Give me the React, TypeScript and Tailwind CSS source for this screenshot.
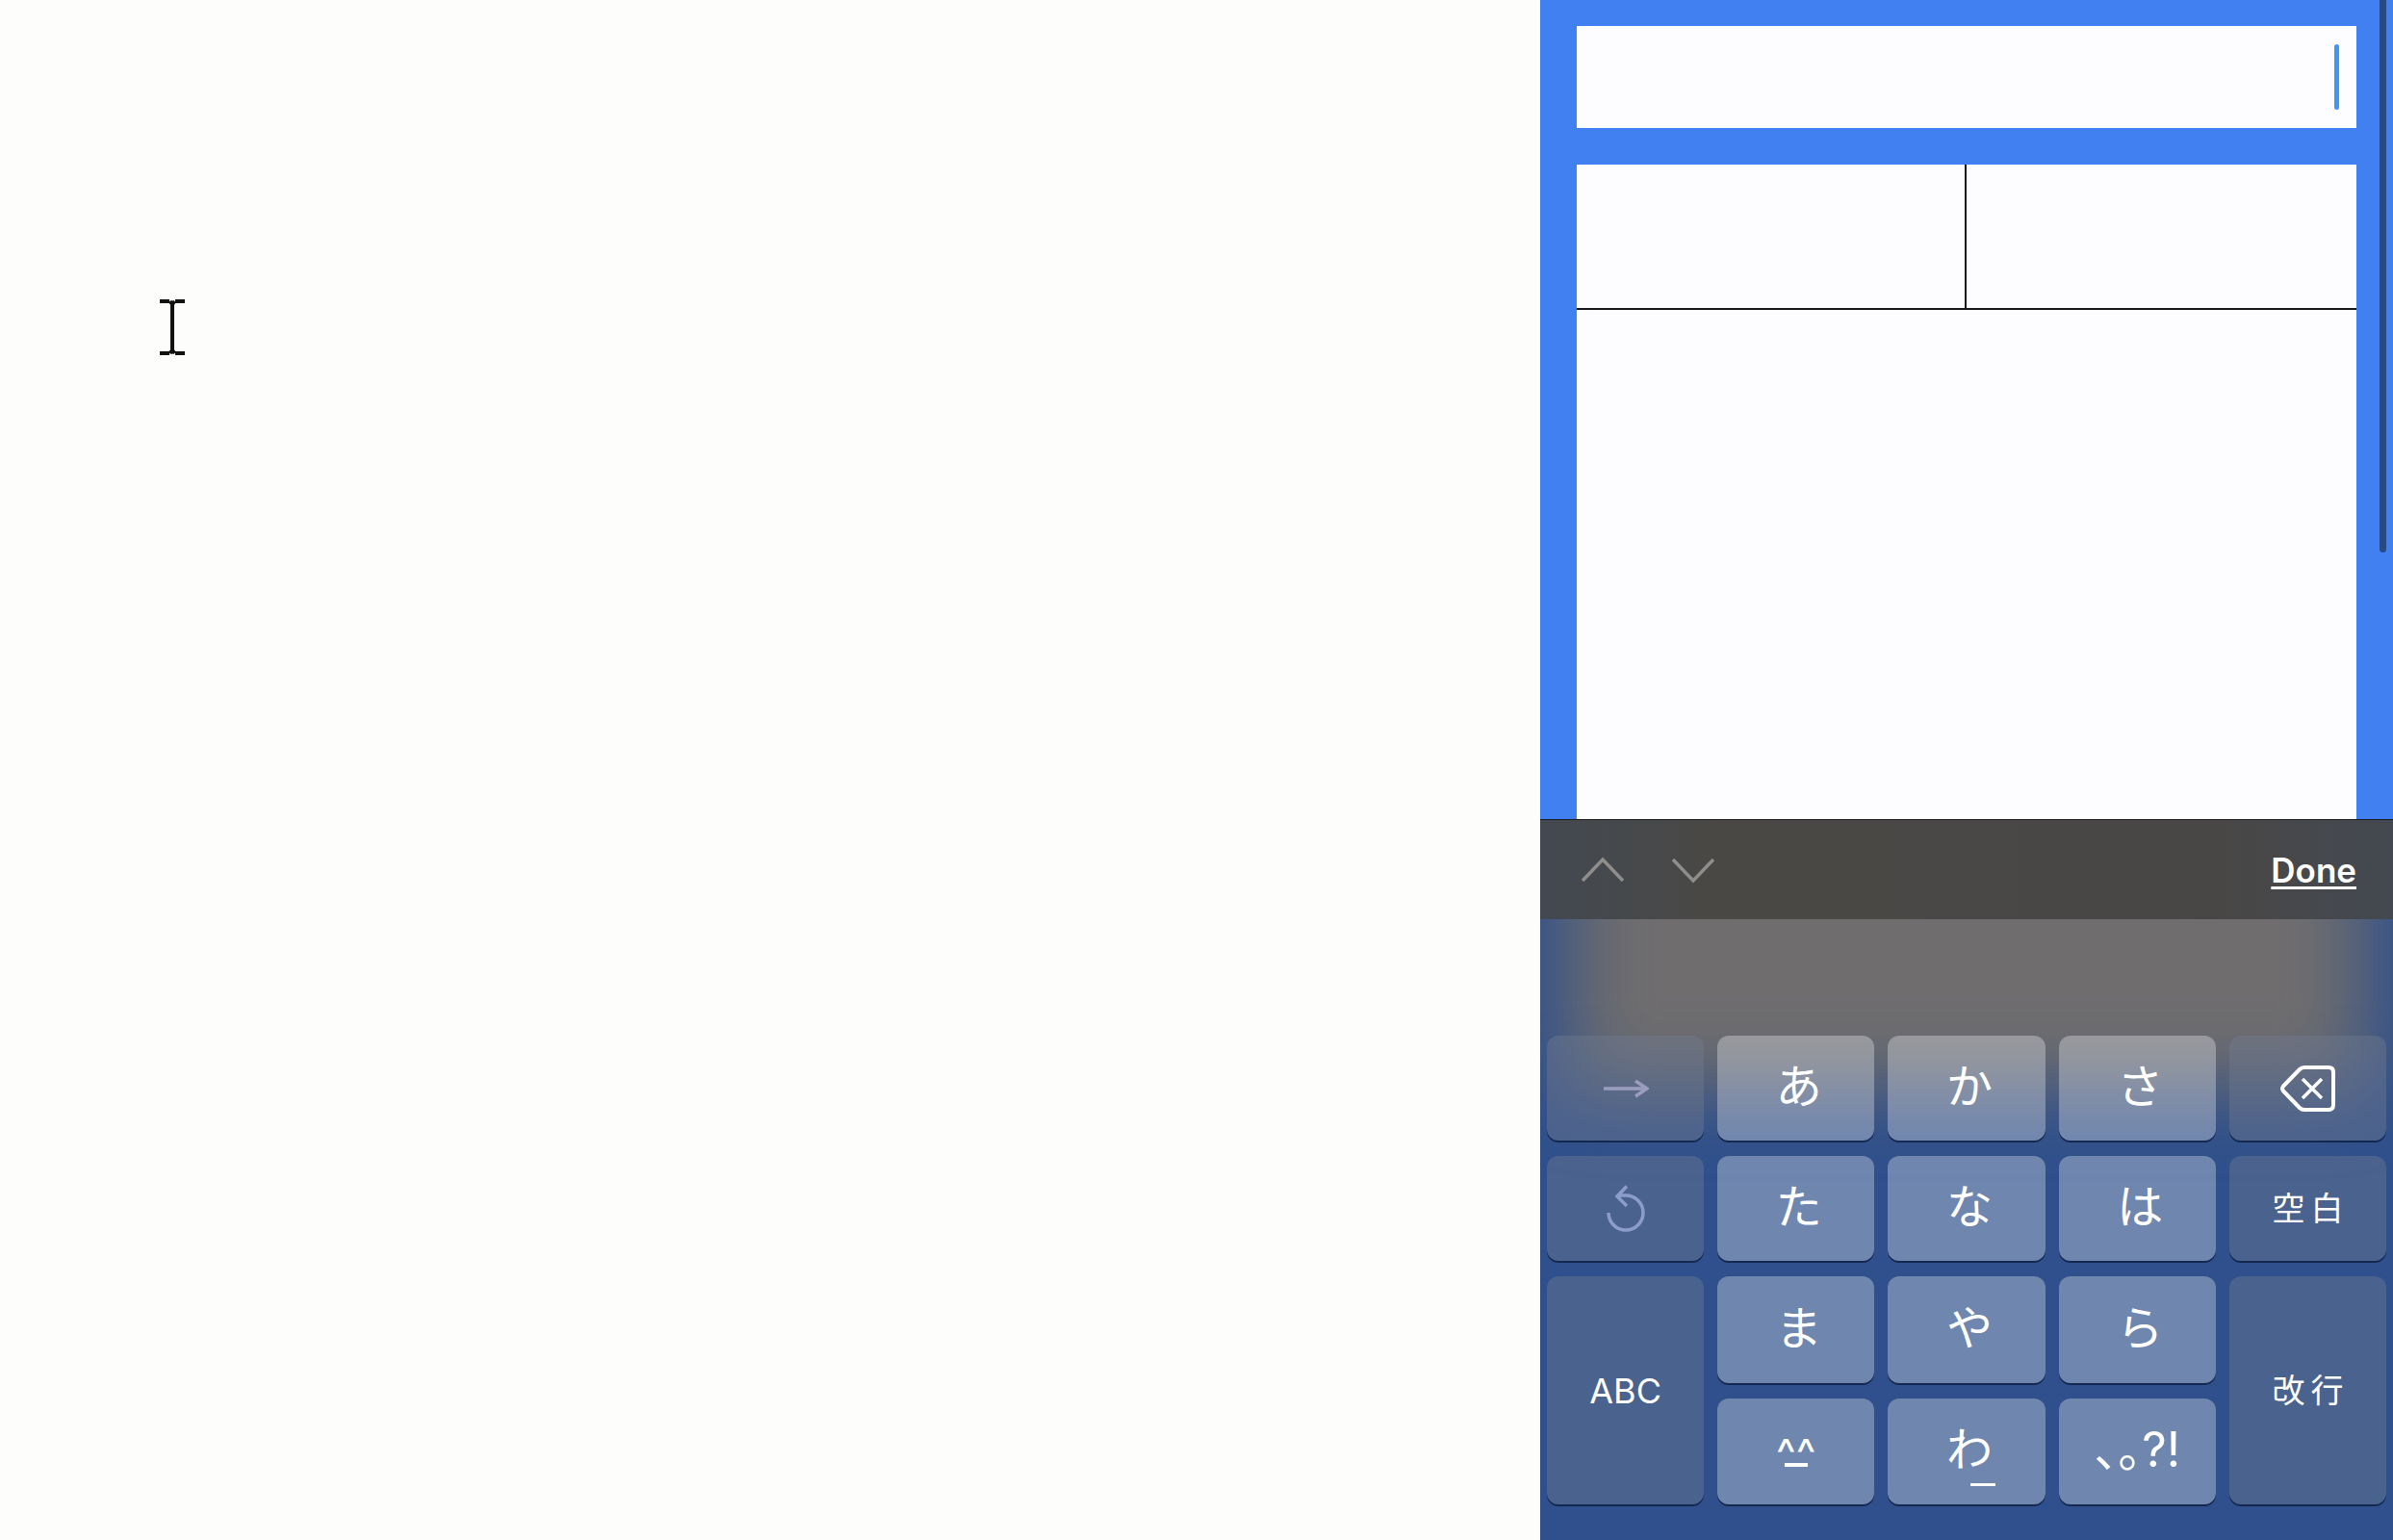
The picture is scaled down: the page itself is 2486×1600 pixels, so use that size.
import type { ReactNode } from "react";

const KEY_BASE =
  "relative flex items-center justify-center rounded-xl text-white shadow-[0_2px_0_#142850]";

function LightKey({
  children,
  label,
  centered = false,
}: {
  children: ReactNode;
  label?: string;
  centered?: boolean;
}) {
  return (
    <button
      type="button"
      aria-label={label}
      className={`${KEY_BASE} bg-white/31 pb-1 text-[48px] leading-none font-normal ${centered ? "" : "pl-1.5"}`}
    >
      {children}
    </button>
  );
}

function DarkKey({
  children,
  label,
  tall = false,
}: {
  children: ReactNode;
  label?: string;
  tall?: boolean;
}) {
  return (
    <button
      type="button"
      aria-label={label}
      className={`${KEY_BASE} bg-[#737d91]/40 text-[34px] leading-none ${tall ? "row-span-2" : ""}`}
    >
      {children}
    </button>
  );
}

function WideWord({ first, second }: { first: string; second: string }) {
  return (
    <span className="flex gap-1.5 font-normal">
      <span>{first}</span>
      <span>{second}</span>
    </span>
  );
}

function TextPointer() {
  return (
    <svg
      className="pointer-events-none absolute top-[310px] left-[165px] h-[60px] w-[28px]"
      viewBox="0 0 28 60"
      fill="none"
      stroke="#111"
      strokeWidth="4"
      aria-hidden="true"
    >
      <path d="M1 3h10M17 3h10M14 5v50M11.500 3l2.500 3 2.500-3M1 57h10M17 57h10M11.500 57l2.500-3 2.500 3" />
    </svg>
  );
}

function Chevron({ down = false }: { down?: boolean }) {
  return (
    <svg
      className="h-[28px] w-[46px]"
      viewBox="0 0 46 28"
      fill="none"
      stroke="#8f8e8c"
      strokeWidth="3.500"
      aria-hidden="true"
    >
      <path d={down ? "M2 3l21 22L44 3" : "M2 25L23 3l21 22"} />
    </svg>
  );
}

function ArrowIcon() {
  return (
    <svg
      className="h-[20px] w-[48px]"
      viewBox="0 0 48 20"
      fill="none"
      stroke="#9a9dbd"
      strokeWidth="3.500"
      aria-hidden="true"
    >
      <path d="M1 10h44M34 2l12 8-12 8" />
    </svg>
  );
}

function UndoIcon() {
  return (
    <svg
      className="h-[50px] w-[42px]"
      viewBox="0 0 42 50"
      fill="none"
      stroke="#8c9ccb"
      strokeWidth="3.500"
      aria-hidden="true"
    >
      <path d="M3 29a18 18 0 1 0 18-18h-8M22 1.500L12 12l10 10" />
    </svg>
  );
}

function BackspaceIcon() {
  return (
    <svg
      className="h-[50px] w-[58px]"
      viewBox="0 0 58 50"
      fill="none"
      stroke="#fff"
      strokeLinejoin="round"
      aria-hidden="true"
    >
      <path
        d="M26 3h25q5 0 5 5v34q0 5-5 5H26q-3 0-5-2L4 27.500q-2-2.500 0-5L21 5q2-2 5-2z"
        strokeWidth="4"
      />
      <path d="M24 15l20 20M44 15L24 35" strokeWidth="3.500" />
    </svg>
  );
}

function Keyboard() {
  return (
    <section aria-label="Keyboard" className="relative">
      <div className="flex h-[104px] items-center justify-between border-t border-[#1c1c20] bg-[linear-gradient(90deg,#434951,#494845_20%,#494746_80%,#434951)] px-[38px]">
        <div className="flex gap-10">
          <button type="button" aria-label="Previous field" className="p-1">
            <Chevron />
          </button>
          <button type="button" aria-label="Next field" className="p-1">
            <Chevron down />
          </button>
        </div>
        <button
          type="button"
          className="text-[35px] leading-10 font-semibold text-white underline decoration-[3px] underline-offset-4"
        >
          Done
        </button>
      </div>

      <div className="relative overflow-hidden bg-[#2f508c] px-[7px] pt-[121px] pb-[37px]">
        <div className="absolute inset-x-7 -top-24 h-[272px] bg-[#6f6d6e] blur-[40px]" />
        <div className="relative grid grid-cols-5 grid-rows-[109px_109px_111px_110px] gap-x-3.5 gap-y-4">
          <DarkKey label="Next character">
            <ArrowIcon />
          </DarkKey>
          <LightKey>あ</LightKey>
          <LightKey>か</LightKey>
          <LightKey>さ</LightKey>
          <DarkKey label="Delete">
            <BackspaceIcon />
          </DarkKey>

          <DarkKey label="Undo">
            <UndoIcon />
          </DarkKey>
          <LightKey>た</LightKey>
          <LightKey>な</LightKey>
          <LightKey>は</LightKey>
          <DarkKey>
            <WideWord first="空" second="白" />
          </DarkKey>

          <DarkKey tall>
            <span className="text-[36px]">ABC</span>
          </DarkKey>
          <LightKey>ま</LightKey>
          <LightKey>や</LightKey>
          <LightKey>ら</LightKey>
          <DarkKey tall>
            <WideWord first="改" second="行" />
          </DarkKey>

          <LightKey label="^_^" centered>
            <span className="flex flex-col items-center text-[44px]">
              <span className="h-8">^^</span>
              <span className="h-1 w-6 bg-white" />
            </span>
          </LightKey>
          <LightKey label="わ_">
            わ<span className="absolute right-[52px] bottom-[19px] h-[3px] w-[26px] bg-white" />
          </LightKey>
          <LightKey centered>
            <span className="text-[50px] [font-feature-settings:'halt']">、。?!</span>
          </LightKey>
        </div>
      </div>
    </section>
  );
}

export default function App() {
  return (
    <div className="grid min-h-screen grid-cols-[1600fr_886fr] bg-[#fdfdfc] font-['Inter','Noto_Sans_CJK_JP',sans-serif]">
      <main className="relative flex">
        <textarea
          aria-label="Document"
          className="flex-1 resize-none bg-transparent p-10 text-4xl outline-none"
        />
        <TextPointer />
      </main>

      <aside className="relative flex flex-col bg-[#4080f0]">
        <div className="flex flex-1 flex-col gap-[38px] px-[38px] pt-[27px]">
          <div className="relative">
            <input
              type="text"
              aria-label="Entry"
              className="block h-[106px] w-full bg-[#fdfdff] px-5 text-right text-5xl outline-none"
            />
            <span className="absolute top-[19px] right-[18px] h-[68px] w-[5px] rounded-full bg-[#3c98f5]" />
          </div>
          <div className="flex flex-1 flex-col bg-[#fdfdff]">
            <div className="grid h-[151px] grid-cols-2 border-b-2 border-[#16151a]">
              <div className="border-r-2 border-[#16151a]" />
              <div />
            </div>
            <div className="flex-1" />
          </div>
        </div>
        <Keyboard />
        <div className="absolute top-0 right-[7px] h-[574px] w-[7px] rounded-b-full bg-[#284a83]" />
      </aside>
    </div>
  );
}
